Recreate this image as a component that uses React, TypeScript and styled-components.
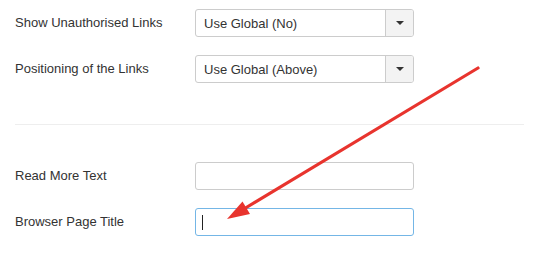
import React, { FC } from 'react';
import styled, { createGlobalStyle } from 'styled-components';

const GlobalStyle = createGlobalStyle`
  html, body {
    margin: 0;
    padding: 0;
    background: #fff;
  }
  body {
    font-family: "Helvetica Neue", "Liberation Sans", Arial, sans-serif;
    font-size: 13px;
    color: #333;
  }
`;

const Page = styled.div`
  position: relative;
  width: 539px;
  height: 262px;
  padding: 9px 15px 0;
  box-sizing: border-box;
  overflow: hidden;
`;

const Row = styled.div`
  display: flex;
  align-items: center;
  height: 28px;
  margin-bottom: 18px;
`;

const Label = styled.label`
  width: 180px;
  flex-shrink: 0;
  font-size: 13px;
  line-height: 18px;
  color: #333;
`;

const Select = styled.div`
  display: flex;
  width: 219px;
  height: 28px;
  box-sizing: border-box;
  border: 1px solid #ccc;
  border-radius: 3px;
  overflow: hidden;
  background: #fff;
`;

const SelectValue = styled.div`
  flex: 1;
  display: flex;
  align-items: center;
  padding-left: 8px;
  font-size: 13px;
  color: #333;
`;

const CaretButton = styled.div`
  width: 27px;
  display: flex;
  align-items: center;
  justify-content: center;
  background: #f3f3f3;
  border-left: 1px solid #ccc;
`;

const Caret = styled.span`
  width: 0;
  height: 0;
  border-left: 4px solid transparent;
  border-right: 4px solid transparent;
  border-top: 4px solid #333;
`;

const Divider = styled.hr`
  border: 0;
  border-top: 1px solid #eee;
  margin: 41px 0 37px;
`;

const TextBox = styled.div<{ $focused?: boolean }>`
  display: flex;
  align-items: center;
  width: 219px;
  height: 28px;
  box-sizing: border-box;
  padding-left: 6px;
  border: 1px solid ${p => (p.$focused ? '#74b6e6' : '#ccc')};
  border-radius: 3px;
  background: #fff;
`;

const TextCursor = styled.span`
  width: 1px;
  height: 15px;
  background: #222;
`;

const Overlay = styled.svg`
  position: absolute;
  left: 0;
  top: 0;
  pointer-events: none;
`;

const Arrow: FC = () => (
  <Overlay width="539" height="262" viewBox="0 0 539 262">
    <line x1="478" y1="68" x2="243" y2="209.5" stroke="#e8342e" strokeWidth="3.2" strokeLinecap="round" />
    <polygon points="227,219 250,214 242.5,201.5" fill="#e8342e" />
  </Overlay>
);

const SelectField: FC<{ label: string; value: string }> = ({ label, value }) => (
  <Row>
    <Label>{label}</Label>
    <Select>
      <SelectValue>{value}</SelectValue>
      <CaretButton>
        <Caret />
      </CaretButton>
    </Select>
  </Row>
);

const App: FC = () => (
  <>
    <GlobalStyle />
    <Page>
      <SelectField label="Show Unauthorised Links" value="Use Global (No)" />
      <SelectField label="Positioning of the Links" value="Use Global (Above)" />
      <Divider />
      <Row>
        <Label>Read More Text</Label>
        <TextBox />
      </Row>
      <Row>
        <Label>Browser Page Title</Label>
        <TextBox $focused>
          <TextCursor />
        </TextBox>
      </Row>
      <Arrow />
    </Page>
  </>
);

export default App;
